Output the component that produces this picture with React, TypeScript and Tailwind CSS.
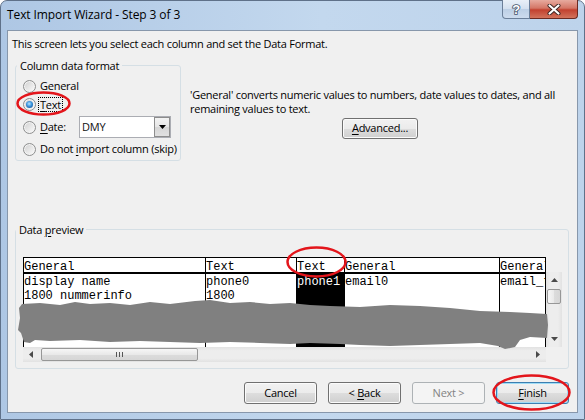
import React from "react";

function Radio({ checked }: { checked?: boolean }) {
  return (
    <span className="flex h-[13px] w-[13px] shrink-0 items-center justify-center rounded-full border border-[#8e8f8f] bg-[linear-gradient(135deg,#cfcfcf,#fdfdfd)] shadow-[inset_0_0_0_1px_#f4f4f4]">
      {checked && (
        <span className="h-[7px] w-[7px] rounded-full bg-[radial-gradient(circle_at_45%_40%,#b8e4ff_0%,#3a95dd_45%,#0f3f7e_100%)]" />
      )}
    </span>
  );
}

function Arrow({ dir }: { dir: "up" | "down" | "left" | "right" }) {
  const pts =
    dir === "up"
      ? "0,4 3.5,0 7,4"
      : dir === "down"
      ? "0,0 7,0 3.5,4"
      : dir === "left"
      ? "4,0 4,7 0,3.5"
      : "0,0 0,7 4,3.5";
  const w = dir === "up" || dir === "down" ? 7 : 4;
  const h = dir === "up" || dir === "down" ? 4 : 7;
  return (
    <svg width={w} height={h} viewBox={`0 0 ${w} ${h}`}>
      <polygon points={pts} fill="#4a4a4a" />
    </svg>
  );
}

const btn =
  "flex h-[22px] w-[73px] items-center justify-center rounded-[3px] border border-[#707070] bg-[linear-gradient(to_bottom,#f2f2f2_0%,#ebebeb_50%,#dddddd_51%,#cfcfcf_100%)] shadow-[inset_0_0_0_1px_#fbfbfb]";

export default function App() {
  return (
    <div className="relative h-[420px] w-[585px] overflow-hidden bg-white font-['Open_Sans',sans-serif] text-[11px] tracking-[-0.25px] text-black">
      <div className="flex h-full w-full flex-col rounded-t-[7px] border border-[#5f7189] bg-[linear-gradient(to_right,#aec7e4,#c3d8ee_55%,#bdd3eb)]">
        {/* title bar */}
        <div className="flex h-[29px] shrink-0 items-start">
          <div className="pl-[6px] pt-[6px] text-[12px] leading-[16px] tracking-[-0.1px]">
            Text Import Wizard - Step 3 of 3
          </div>
          <div className="ml-auto mr-[6px] -mt-[1px] flex">
            <div className="flex h-[19px] w-[28px] items-center justify-center rounded-bl-[4px] border border-t-0 border-[#6b7f99] bg-[linear-gradient(to_bottom,#e9f0f8,#d3e0ef_50%,#bccfe5_51%,#cddcee)]">
              <svg width="12" height="14" viewBox="0 0 12 14">
                <text
                  x="6"
                  y="12"
                  textAnchor="middle"
                  fontFamily="Liberation Sans, sans-serif"
                  fontWeight="bold"
                  fontSize="13"
                  fill="#ffffff"
                  stroke="#44536a"
                  strokeWidth="1.6"
                  paintOrder="stroke"
                >
                  ?
                </text>
              </svg>
            </div>
            <div className="flex h-[19px] w-[48px] items-center justify-center rounded-br-[4px] border border-l-0 border-t-0 border-[#6b2a22] bg-[linear-gradient(to_bottom,#e7ab9f,#d47666_45%,#c2412f_55%,#d2735c)]">
              <svg width="14" height="11" viewBox="0 0 14 11">
                <path d="M2.5 1.5 L11.5 9.5 M11.5 1.5 L2.5 9.5" stroke="#3a2320" strokeWidth="4" strokeLinecap="round" />
                <path d="M2.5 1.5 L11.5 9.5 M11.5 1.5 L2.5 9.5" stroke="#ffffff" strokeWidth="2.2" strokeLinecap="round" />
              </svg>
            </div>
          </div>
        </div>

        {/* client area */}
        <div className="mx-[6px] flex h-[383px] shrink-0 flex-col border border-[#8797ab] bg-[#f0f0f0]">
          <div className="pl-[4px] pt-[5px] leading-[15px]">
            This screen lets you select each column and set the Data Format.
          </div>

          <div className="mt-[7px] flex pl-[7px]">
            <fieldset className="h-[103px] w-[166px] shrink-0 rounded-[3px] border border-[#d5dfe5]">
              <legend className="ml-[1px] px-[3px] leading-[15px]">Column data format</legend>
              <div className="flex flex-col pl-[7px] pt-[4px]">
                <div className="flex h-[18px] items-center gap-[4px]">
                  <Radio />
                  <span>General</span>
                </div>
                <div className="flex h-[18px] items-center gap-[2px]">
                  <Radio checked />
                  <span className="border border-dotted border-black px-[1px] leading-[13px]">
                    <span className="underline underline-offset-[2px]">T</span>ext
                  </span>
                </div>
                <div className="mt-[3px] flex h-[22px] items-center gap-[4px]">
                  <Radio />
                  <span className="w-[35px]">
                    <span className="underline underline-offset-[2px]">D</span>ate:
                  </span>
                  <div className="flex h-[22px] w-[92px] items-center border border-[#abadb3] bg-white">
                    <span className="pl-[2px] text-[#111]">DMY</span>
                    <div className="ml-auto flex h-[20px] w-[16px] items-center justify-center border border-[#8d8d8d] bg-[linear-gradient(to_bottom,#f3f3f3,#e6e6e6_50%,#d6d6d6_51%,#e0e0e0)]">
                      <svg width="7" height="4" viewBox="0 0 7 4">
                        <polygon points="0,0 7,0 3.5,4" fill="#000" />
                      </svg>
                    </div>
                  </div>
                </div>
                <div className="mt-[2px] flex h-[18px] items-center gap-[4px]">
                  <Radio />
                  <span className="whitespace-nowrap">
                    Do not <span className="underline underline-offset-[2px]">i</span>mport column (skip)
                  </span>
                </div>
              </div>
            </fieldset>

            <div className="flex flex-col pl-[9px] pt-[30px]">
              <div className="whitespace-nowrap leading-[14px]">
                <div>'General' converts numeric values to numbers, date values to dates, and all</div>
                <div>remaining values to text.</div>
              </div>
              <div className={"ml-[152px] mt-[2px] !h-[21px] !w-[76px] " + btn}>
                <span>
                  <span className="underline underline-offset-[2px]">A</span>dvanced...
                </span>
              </div>
            </div>
          </div>

          <div className="mt-[61px] pl-[7px]">
            <fieldset className="h-[147px] w-[554px] rounded-[3px] border border-[#d5dfe5]">
              <legend className="px-[3px] leading-[15px]">
                Data <span className="underline underline-offset-[2px]">p</span>review
              </legend>
              <div className="flex pl-[7px] pt-[20px]">
                <div className="flex w-[523px] flex-col">
                  <div className="flex h-[90px] w-[523px] overflow-hidden border-l border-t border-black bg-white font-['Liberation_Mono',monospace] text-[12px] tracking-normal text-black">
                    <div className="flex w-[182px] shrink-0 flex-col border-r border-black">
                      <div className="h-[16px] overflow-hidden whitespace-nowrap border-b-2 border-black leading-[18px]">General</div>
                      <div className="flex-1 whitespace-pre pt-[1px] leading-[14px]">
                        <div>display name</div>
                        <div>1800 nummerinfo</div>
                      </div>
                    </div>
                    <div className="flex w-[91px] shrink-0 flex-col border-r border-black">
                      <div className="h-[16px] overflow-hidden whitespace-nowrap border-b-2 border-black leading-[18px]">Text</div>
                      <div className="flex-1 whitespace-pre pt-[1px] leading-[14px]">
                        <div>phone0</div>
                        <div>1800</div>
                      </div>
                    </div>
                    <div className="flex w-[48px] shrink-0 flex-col border-r border-black">
                      <div className="h-[16px] overflow-hidden whitespace-nowrap border-b-2 border-black bg-white leading-[18px]">Text</div>
                      <div className="flex-1 overflow-hidden whitespace-pre bg-black pt-[1px] leading-[14px] text-white">
                        <div>phone1</div>
                      </div>
                    </div>
                    <div className="flex w-[155px] shrink-0 flex-col border-r border-black">
                      <div className="h-[16px] overflow-hidden whitespace-nowrap border-b-2 border-black leading-[18px]">General</div>
                      <div className="flex-1 whitespace-pre pt-[1px] leading-[14px]">
                        <div>email0</div>
                      </div>
                    </div>
                    <div className="flex w-[46px] shrink-0 flex-col overflow-hidden border-r border-black">
                      <div className="h-[16px] overflow-hidden whitespace-nowrap border-b-2 border-black leading-[18px]">General</div>
                      <div className="flex-1 overflow-hidden whitespace-pre pt-[1px] leading-[14px]">
                        <div>email_type</div>
                      </div>
                    </div>
                  </div>
                  {/* horizontal scrollbar */}
                  <div className="flex h-[15px] w-[523px] items-center bg-[linear-gradient(to_bottom,#e2e2e2,#ededed_25%,#ededed_75%,#e2e2e2)]">
                    <div className="flex h-full w-[16px] items-center justify-center">
                      <Arrow dir="left" />
                    </div>
                    <div className="ml-[2px] flex h-[13px] w-[157px] items-center justify-center gap-[2px] rounded-[2px] border border-[#979797] bg-[linear-gradient(to_bottom,#f6f6f6,#e9e9e9_50%,#dcdcdc_51%,#d6d6d6)]">
                      <span className="h-[5px] w-px bg-[#555]" />
                      <span className="h-[5px] w-px bg-[#555]" />
                      <span className="h-[5px] w-px bg-[#555]" />
                    </div>
                    <div className="ml-auto flex h-full w-[16px] items-center justify-center">
                      <Arrow dir="right" />
                    </div>
                  </div>
                </div>
                {/* vertical scrollbar */}
                <div className="flex w-[16px] flex-col">
                  <div className="h-[15px]" />
                  <div className="flex h-[75px] flex-col items-center bg-[linear-gradient(to_right,#e2e2e2,#ededed_25%,#ededed_75%,#e2e2e2)]">
                    <div className="flex h-[16px] w-full items-center justify-center">
                      <Arrow dir="up" />
                    </div>
                    <div className="mt-[1px] h-[15px] w-[14px] rounded-[2px] border border-[#979797] bg-[linear-gradient(to_right,#f6f6f6,#e9e9e9_50%,#dcdcdc_51%,#d6d6d6)]" />
                    <div className="mt-auto flex h-[16px] w-full items-center justify-center">
                      <Arrow dir="down" />
                    </div>
                  </div>
                </div>
              </div>
            </fieldset>
          </div>

          <div className="mt-[13px] flex justify-end gap-[11px] pr-[8px]">
            <div className={btn}>Cancel</div>
            <div className={btn}>
              <span>
                &lt; <span className="underline underline-offset-[2px]">B</span>ack
              </span>
            </div>
            <div className="flex h-[22px] w-[73px] items-center justify-center rounded-[3px] border border-[#adb2b5] bg-[#f4f4f4] text-[#838383]">
              Next &gt;
            </div>
            <div className="flex h-[22px] w-[73px] items-center justify-center rounded-[3px] border border-[#3c7fb1] bg-[linear-gradient(to_bottom,#f2f2f2_0%,#ebebeb_50%,#dddddd_51%,#cfcfcf_100%)] shadow-[inset_0_0_0_1px_#9fdcf6]">
              <span>
                <span className="underline underline-offset-[2px]">F</span>inish
              </span>
            </div>
          </div>
        </div>
      </div>

      {/* annotations drawn over the screenshot */}
      <svg className="pointer-events-none absolute left-0 top-0" width="585" height="420" viewBox="0 0 585 420">
        <path
          fill="#808080"
          d="M19 308 L22 304 L40 303 L60 305 L75 302 L90 304 L110 303 L130 305 L150 302 L170 304 L195 301 L210 300 L230 303 L250 302 L270 304 L290 303 L310 305 L330 306 L360 307 L390 305 L420 306 L450 308 L480 311 L510 312 L530 313 L547 314 L548 325 L547 338 L530 337 L520 340 L515 347 L505 349 L498 346 L480 343 L450 344 L420 345 L390 346 L360 345 L340 344 L310 343 L290 344 L260 343 L230 342 L200 343 L170 342 L140 341 L110 342 L80 340 L50 341 L35 340 L30 343 L24 342 L21 333 L18 330 L20 318 Z"
        />
        <ellipse cx="43.5" cy="103.5" rx="26" ry="11" fill="none" stroke="#e3151b" strokeWidth="2.5" />
        <ellipse cx="316.5" cy="262" rx="29" ry="14.5" fill="none" stroke="#e3151b" strokeWidth="2.5" />
        <ellipse cx="531.5" cy="392.5" rx="38" ry="17" fill="none" stroke="#e3151b" strokeWidth="2.5" />
      </svg>
    </div>
  );
}
